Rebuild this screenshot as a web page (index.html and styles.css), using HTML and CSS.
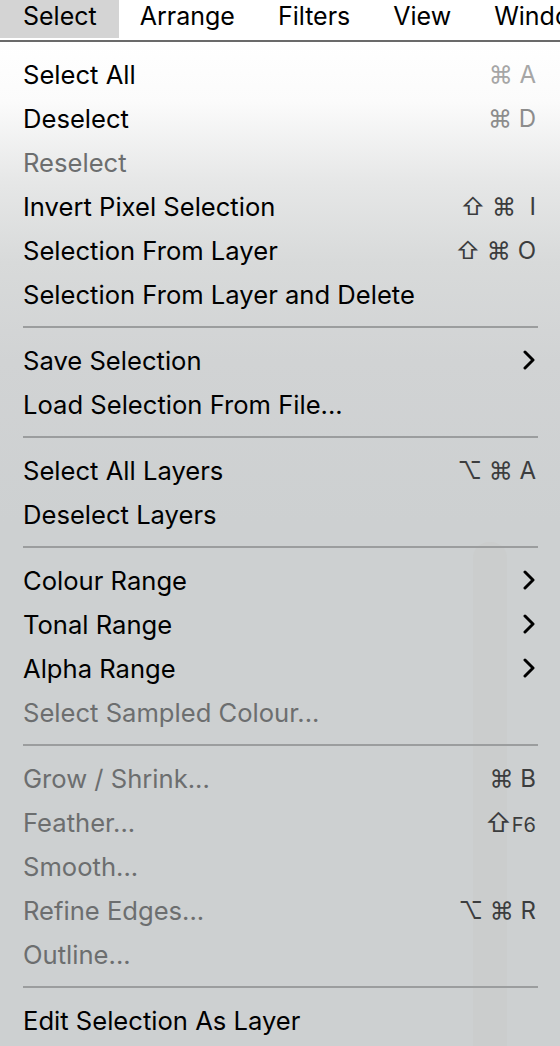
FILE: index.html
```html
<!DOCTYPE html>
<html lang="en">
<head>
  <meta charset="UTF-8">
  <title>Select Menu</title>
  <link rel="stylesheet" href="styles.css">
</head>
<body>

  <div class="menubar">
    <div class="menubar-item active">Select</div>
    <div class="menubar-item">Arrange</div>
    <div class="menubar-item">Filters</div>
    <div class="menubar-item">View</div>
    <div class="menubar-item">Window</div>
  </div>

  <div class="menu">
    <div class="band"></div>

    <div class="item"><span>Select All</span><span class="key key-faint">⌘ A</span></div>
    <div class="item"><span>Deselect</span><span class="key key-light">⌘ D</span></div>
    <div class="item disabled"><span>Reselect</span></div>
    <div class="item"><span>Invert Pixel Selection</span><span class="key">⇧ ⌘ &nbsp;I</span></div>
    <div class="item"><span>Selection From Layer</span><span class="key">⇧ ⌘ O</span></div>
    <div class="item"><span>Selection From Layer and Delete</span></div>

    <div class="separator"></div>

    <div class="item"><span>Save Selection</span><svg class="chevron" viewBox="0 0 12 20"><path d="M2 2 L10 10 L2 18" /></svg></div>
    <div class="item"><span>Load Selection From File...</span></div>

    <div class="separator"></div>

    <div class="item"><span>Select All Layers</span><span class="key">⌥ ⌘ A</span></div>
    <div class="item"><span>Deselect Layers</span></div>

    <div class="separator"></div>

    <div class="item"><span>Colour Range</span><svg class="chevron" viewBox="0 0 12 20"><path d="M2 2 L10 10 L2 18" /></svg></div>
    <div class="item"><span>Tonal Range</span><svg class="chevron" viewBox="0 0 12 20"><path d="M2 2 L10 10 L2 18" /></svg></div>
    <div class="item"><span>Alpha Range</span><svg class="chevron" viewBox="0 0 12 20"><path d="M2 2 L10 10 L2 18" /></svg></div>
    <div class="item disabled"><span>Select Sampled Colour...</span></div>

    <div class="separator"></div>

    <div class="item disabled"><span>Grow / Shrink...</span><span class="key">⌘ B</span></div>
    <div class="item disabled"><span>Feather...</span><span class="key"><span class="shift">⇧</span><span class="small">F6</span></span></div>
    <div class="item disabled"><span>Smooth...</span></div>
    <div class="item disabled"><span>Refine Edges...</span><span class="key">⌥ ⌘ R</span></div>
    <div class="item disabled"><span>Outline...</span></div>

    <div class="separator"></div>

    <div class="item"><span>Edit Selection As Layer</span></div>
  </div>

</body>
</html>
```

FILE: styles.css
```css
body {
  margin: 0;
  font-family: Inter, "Noto Sans", sans-serif;
  font-size: 25.6px;
  color: #000;
  background: #cdd0d1;
  overflow: hidden;
}

.menubar {
  display: flex;
  height: 40px;
  background: #fff;
  border-bottom: 2px solid #6a6a6a;
  white-space: nowrap;
  overflow: hidden;
  font-size: 25px;
}

.menubar-item {
  padding: 0 20px 0 23px;
  line-height: 33px;
  height: 38px;
}

.menubar-item.active {
  background: #d4d4d4;
  padding-right: 22px;
}

.menubar-item.active + .menubar-item {
  padding-left: 21px;
}

.menu {
  position: relative;
  padding: 10px 22px 0 23px;
  background: linear-gradient(to bottom, #ffffff 0px, #fbfbfb 60px, #e6e7e7 140px, #d8dada 220px, #d1d3d4 320px, #cdd0d1 480px);
  height: 1004px;
  box-sizing: border-box;
}

.band {
  position: absolute;
  left: 473px;
  top: 500px;
  width: 34px;
  bottom: 0;
  background: #cbcdcd;
  border-radius: 16px 16px 0 0;
}

.item {
  position: relative;
  display: flex;
  justify-content: space-between;
  align-items: center;
  height: 44px;
  white-space: nowrap;
}

.item.disabled {
  color: #6c6e6f;
}

.key {
  color: #3c3d3e;
  font-size: 24px;
  padding-right: 2px;
}

.key-faint {
  color: #a6a6a6;
}

.key-light {
  color: #8c8c8c;
}

.shift {
  font-size: 26px;
}

.small {
  font-size: 20px;
}

.chevron {
  width: 12px;
  height: 20px;
  margin-right: 3px;
  fill: none;
  stroke: #000;
  stroke-width: 3;
  stroke-linecap: round;
  stroke-linejoin: round;
}

.separator {
  height: 2px;
  background: #9b9d9e;
  margin: 10px 0;
  position: relative;
}
```
